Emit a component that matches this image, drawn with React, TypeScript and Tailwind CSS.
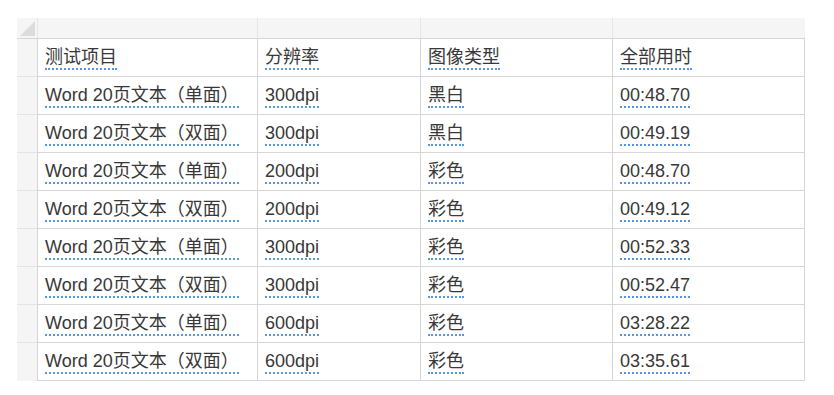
import React from 'react';

const rows: string[][] = [
  ['Word 20页文本（单面）', '300dpi', '黑白', '00:48.70'],
  ['Word 20页文本（双面）', '300dpi', '黑白', '00:49.19'],
  ['Word 20页文本（单面）', '200dpi', '彩色', '00:48.70'],
  ['Word 20页文本（双面）', '200dpi', '彩色', '00:49.12'],
  ['Word 20页文本（单面）', '300dpi', '彩色', '00:52.33'],
  ['Word 20页文本（双面）', '300dpi', '彩色', '00:52.47'],
  ['Word 20页文本（单面）', '600dpi', '彩色', '03:28.22'],
  ['Word 20页文本（双面）', '600dpi', '彩色', '03:35.61'],
];

const header = ['测试项目', '分辨率', '图像类型', '全部用时'];

const widths = ['w-[220px]', 'w-[163px]', 'w-[192px]', 'w-[193px]'];

function Cell({ text, col }: { text: string; col: number }) {
  return (
    <div
      className={`${widths[col]} flex items-end pl-[7px] pb-[6px] border-l border-b border-[#d6d6d6] ${
        col === 3 ? 'border-r' : ''
      }`}
    >
      <span className="inline-block whitespace-nowrap border-b-2 border-dotted border-[#5794ec] leading-[22px]">
        {text}
      </span>
    </div>
  );
}

function Row({ cells, last }: { cells: string[]; last?: boolean }) {
  return (
    <div className="flex h-[38px]">
      <div className={`w-[20px] bg-[#f5f5f5] ${last ? '' : 'border-b border-[#e4e4e4]'}`} />
      {cells.map((c, i) => (
        <Cell key={i} text={c} col={i} />
      ))}
    </div>
  );
}

export default function App() {
  return (
    <div
      className="min-h-screen bg-white pl-[17px] pt-[18px] text-[18px] text-[#383838]"
      style={{ fontFamily: '"Liberation Sans", "Noto Sans CJK SC", sans-serif' }}
    >
      <div className="w-[788px]">
        {/* column letters strip */}
        <div className="flex h-[21px] bg-[#f5f5f5] border-b border-[#d6d6d6]">
          <div className="w-[20px] flex items-end justify-end pr-[2px] pb-[2px]">
            <svg width="15" height="15" viewBox="0 0 15 15">
              <polygon points="15,0 15,15 0,15" fill="#dcdcdc" />
            </svg>
          </div>
          <div className="w-[220px] border-l border-[#e6e6e6]" />
          <div className="w-[163px] border-l border-[#e6e6e6]" />
          <div className="w-[192px] border-l border-[#e6e6e6]" />
          <div className="w-[193px] border-l border-[#e6e6e6]" />
        </div>
        <Row cells={header} />
        {rows.map((r, i) => (
          <Row key={i} cells={r} last={i === rows.length - 1} />
        ))}
      </div>
    </div>
  );
}
